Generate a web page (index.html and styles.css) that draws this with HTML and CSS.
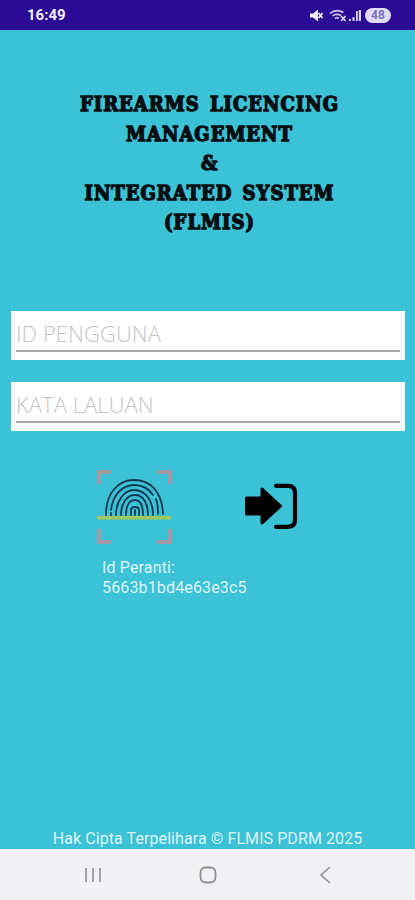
FILE: index.html
```html
<!DOCTYPE html>
<html lang="ms">
<head>
<meta charset="utf-8">
<title>FLMIS</title>
<link rel="stylesheet" href="styles.css">
</head>
<body>
<div class="phone">
  <header class="status">
    <span class="time">16:49</span>
    <div class="status-icons">
      <svg class="ic-mute" width="13" height="13" viewBox="0 0 13 13"><path d="M0 4.500h3L8 .5v12l-5-4H0z" fill="#eeecf8"/><path d="M8.500 4l4 5M12.500 4l-4 5" stroke="#eeecf8" stroke-width="1.800"/></svg>
      <svg class="ic-wifi" width="18" height="13" viewBox="0 0 18 13"><path d="M1 4.500C5 1 10 1 14.500 3.500M3.500 7C6 5 9 5 12 6.500M6 9.500c1.400-1 2.600-1 4 0" fill="none" stroke="#cfcbe8" stroke-width="1.600"/><path d="M12 7l4.500 5M16.500 7L12 12" stroke="#e6e4f4" stroke-width="1.400"/></svg>
      <svg class="ic-signal" width="13" height="13" viewBox="0 0 13 13"><path d="M1 10h2v2H1zM4.500 8h2v4h-2zM8 2h1.800v10H8zM10.800 1H13v11h-2.200z" fill="#d8d5ee"/></svg>
      <span class="battery">48</span>
    </div>
  </header>

  <main class="screen">
    <h1 class="title">FIREARMS LICENCING<br>MANAGEMENT<br>&amp;<br>INTEGRATED SYSTEM<br>(FLMIS)</h1>

    <form class="fields">
      <div class="field"><span class="field-text">ID PENGGUNA</span></div>
      <div class="field"><span class="field-text">KATA LALUAN</span></div>
    </form>

    <section class="actions">
      <div class="finger-col">
        <svg class="finger" width="78" height="76" viewBox="0 0 78 76">
          <g fill="none" stroke="#a39aa6" stroke-width="4">
            <path d="M3 15V3h12"/><path d="M61 3h13v12"/><path d="M3 60v13h12"/><path d="M74 60v13H61"/>
          </g>
          <g fill="none" stroke="#12384f" stroke-width="1.800" stroke-linecap="round">
            <path d="M10 46C10 24 22 11 38 11C54 11 66 22 67 45"/>
            <path d="M15 41C17 25 27 16 38 16C46 16 53 20 57 26"/>
            <path d="M60 30C62 35 62 40 62 45"/>
            <path d="M15 46V44"/>
            <path d="M20 46C20 32 28 21 38 21C49 21 57 31 57 46"/>
            <path d="M25 46C25 34 31 26 39 26C47 26 52 34 52 46"/>
            <path d="M30 46C30 37 33 31 39 31C45 31 47 37 47 46"/>
            <path d="M35 46V41C35 37 43 37 43 41V46"/>
            <path d="M39 41V46"/>
          </g>
          <rect x="1" y="47" width="74" height="3.500" fill="#a0c95a"/>
        </svg>
        <p class="device">Id Peranti:<br>5663b1bd4e63e3c5</p>
      </div>
      <svg class="login" width="54" height="48" viewBox="0 0 54 48">
        <path d="M31 3H43Q50 3 50 10V37Q50 44 43 44H31" transform="translate(0 0.800)" fill="none" stroke="#000" stroke-width="4.200" stroke-linecap="round"/>
        <path d="M1.500 16H17V7L35.500 24 17 41V32H1.500z" fill="#000" stroke="#000" stroke-width="3" stroke-linejoin="round"/>
      </svg>
    </section>

    <footer class="copyright">Hak Cipta Terpelihara © FLMIS PDRM 2025</footer>
  </main>

  <nav class="navbar">
    <svg width="18" height="16" viewBox="0 0 18 16"><path d="M2 1v14M9 1v14M16 1v14" stroke="#8e8e92" stroke-width="1.600" fill="none"/></svg>
    <svg width="18" height="18" viewBox="0 0 18 18"><rect x="1.500" y="1.500" width="15" height="15" rx="5" fill="none" stroke="#8e8e92" stroke-width="1.800"/></svg>
    <svg width="12" height="18" viewBox="0 0 12 18"><path d="M11 1L2 9l9 8" fill="none" stroke="#8e8e92" stroke-width="1.600"/></svg>
  </nav>
</div>
</body>
</html>
```

FILE: styles.css
```css
* { box-sizing: border-box; }
html, body { margin: 0; padding: 0; }
body { font-family: Roboto, "Liberation Sans", sans-serif; }

.phone {
  width: 415px;
  height: 900px;
  display: flex;
  flex-direction: column;
  overflow: hidden;
  background: #3bc2d6;
}

.status {
  height: 30px;
  flex: none;
  background: #2b0a96;
  display: flex;
  align-items: center;
  justify-content: space-between;
  padding: 0 24px 0 27px;
  color: #f0eff8;
}
.time { font-size: 15px; font-weight: 700; }
.status-icons { display: flex; align-items: center; gap: 3px; }
.ic-wifi { margin-left: 3px; margin-right: -2px; }
.battery {
  width: 26px;
  height: 15px;
  margin-left: 1px;
  border-radius: 8px;
  background: #e0ddf3;
  color: #7d6fc4;
  font-size: 12px;
  font-weight: 700;
  line-height: 15px;
  text-align: center;
}

.screen {
  flex: 1;
  display: flex;
  flex-direction: column;
  padding-top: 60px;
}

.title {
  margin: 0;
  padding-left: 4px;
  text-align: center;
  font-family: "DejaVu Serif Condensed", "DejaVu Serif", serif;
  font-weight: 700;
  font-size: 20px;
  line-height: 29.500px;
  letter-spacing: 1px;
  word-spacing: 3px;
  color: #040d10;
  -webkit-text-stroke: 1.300px #040d10;
  height: 146px;
}

.fields {
  margin: 75px 10px 0 11px;
  display: flex;
  flex-direction: column;
  gap: 22px;
}
.field {
  height: 49px;
  background: #fff;
  padding: 0 5px 8px 5px;
  display: flex;
  align-items: flex-end;
}
.field-text {
  flex: 1;
  display: block;
  border-bottom: 2px solid #a8a8a8;
  font-family: "Open Sans", sans-serif;
  font-weight: 300;
  font-size: 22px;
  letter-spacing: 0.05px;
  line-height: 31px;
  padding-bottom: 1px;
  color: #c4c4c4;
}

.actions {
  margin-top: 38px;
  display: flex;
  align-items: flex-start;
}
.finger-col { margin-left: 96px; width: 150px; }
.finger { display: block; }
.device {
  margin: 13px 0 0 6px;
  font-size: 16px;
  line-height: 20px;
  letter-spacing: 0.15px;
  color: #dff4f8;
}
.login { margin: 13px 0 0 -1px; }

.copyright {
  margin-top: auto;
  padding-bottom: 1px;
  text-align: center;
  font-size: 16px;
  line-height: 19px;
  letter-spacing: 0.08px;
  color: #dff4f8;
}

.navbar {
  height: 51px;
  flex: none;
  background: #f1f1f3;
  display: flex;
  align-items: center;
  justify-content: space-between;
  padding: 0 84px 0 84px;
}
.navbar svg:nth-child(2) { margin-left: -6px; }
```
